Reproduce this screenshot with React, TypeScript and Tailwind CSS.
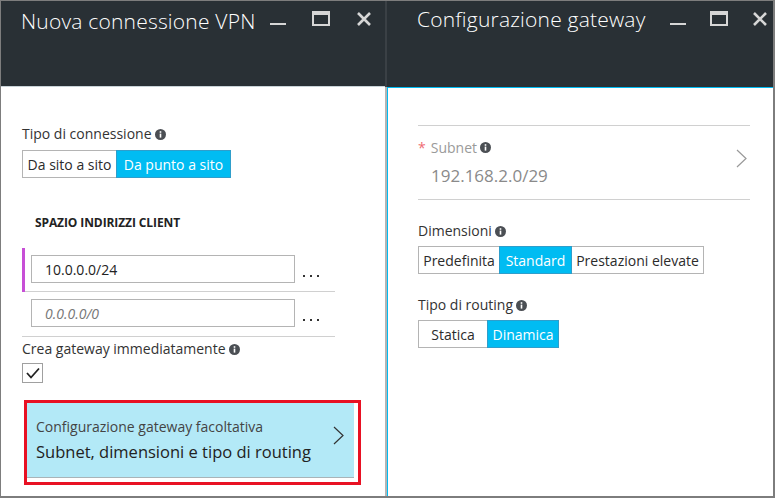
import React from 'react';

const font = { fontFamily: '"Open Sans", "Noto Sans", sans-serif' };

function InfoIcon() {
  return (
    <svg width="11" height="11" viewBox="0 0 11 11" className="ml-[3px] inline-block shrink-0">
      <circle cx="5.5" cy="5.5" r="5.5" fill="#4b4f54" />
      <rect x="4.7" y="4.6" width="1.6" height="4" fill="#fff" />
      <rect x="4.7" y="2.2" width="1.6" height="1.6" fill="#fff" />
    </svg>
  );
}

function WindowControls({ gap }: { gap: string }) {
  return (
    <div className={`flex items-start ${gap}`}>
      <div className="mt-[22px] h-[2px] w-[16px] bg-[#d6d6d6]" />
      <div className="mt-[10px] h-[15px] w-[18px] border-2 border-t-[4px] border-[#d6d6d6]" />
      <svg width="16" height="16" viewBox="0 0 16 16" className="mt-[10px]">
        <path d="M2 2 L14 14 M14 2 L2 14" stroke="#d6d6d6" strokeWidth="2.6" />
      </svg>
    </div>
  );
}

function Toggle({ items, active, widths }: { items: string[]; active: number; widths: string[] }) {
  return (
    <div className="flex h-[28px]">
      {items.map((label, i) => (
        <div
          key={label}
          className={`flex items-center justify-center whitespace-nowrap border text-[14px] ${widths[i]} ${
            i > 0 ? '-ml-px' : ''
          } ${i === active ? 'z-10 border-[#2f9ecb] bg-[#00bcf2] text-white' : 'border-[#b4b4b4] bg-white text-[#2b2b2b]'}`}
        >
          {label}
        </div>
      ))}
    </div>
  );
}

function Dots() {
  return (
    <div className="ml-[8px] mt-[27px] flex gap-[5px]">
      <span className="h-[2px] w-[2px] bg-[#333]" />
      <span className="h-[2px] w-[2px] bg-[#333]" />
      <span className="h-[2px] w-[2px] bg-[#333]" />
    </div>
  );
}

export default function App() {
  return (
    <div className="flex h-[498px] w-[775px] overflow-hidden border-l border-t border-r-2 border-b-2 border-[#7d7d7d] bg-white" style={font}>
      {/* Left blade */}
      <div className="flex w-[384px] flex-col">
        <div className="flex h-[85px] shrink-0 justify-between bg-[#293035] pl-[20px] pr-[13px]">
          <div className="mt-[4px] text-[21px] font-light leading-[32px] tracking-[0.2px] text-white">Nuova connessione VPN</div>
          <WindowControls gap="gap-[26px]" />
        </div>
        <div className="h-px bg-[#c9d3d8]" />
        <div className="flex flex-1 flex-col px-[21px]">
          <div className="mt-[37px] flex items-center text-[14px] leading-[20px] text-[#333]">
            Tipo di connessione
            <InfoIcon />
          </div>
          <div className="mt-[6px]">
            <Toggle items={['Da sito a sito', 'Da punto a sito']} active={1} widths={['w-[95px]', 'w-[115px]']} />
          </div>
          <div className="ml-[13px] mt-[37px] text-[12px] font-bold leading-[16px] tracking-[-0.1px] text-[#222]">
            SPAZIO INDIRIZZI CLIENT
          </div>
          <div className="mt-[17px] w-[313px]">
            <div className="flex h-[44px] border-b border-[#d0d0d0]">
              <div className="h-[44px] w-[3px] bg-[#c74fd6]" />
              <div className="ml-[6px] mt-[7px] flex h-[28px] w-[264px] items-center border border-[#b4b4b4] pl-[13px] text-[14px] text-[#222]">
                10.0.0.0/24
              </div>
              <Dots />
            </div>
            <div className="flex h-[45px] border-b border-[#d0d0d0]">
              <div className="ml-[9px] mt-[7px] flex h-[28px] w-[264px] items-center border border-[#b4b4b4] pl-[13px] text-[14px] italic text-[#777]">
                0.0.0.0/0
              </div>
              <Dots />
            </div>
          </div>
          <div className="mt-[2px] flex items-center text-[14px] leading-[20px] text-[#333]">
            Crea gateway immediatamente
            <InfoIcon />
          </div>
          <div className="mt-[4px] flex h-[20px] w-[21px] items-center justify-center border border-[#a0a0a0]">
            <svg width="14" height="12" viewBox="0 0 14 12">
              <path d="M1 6 L5 10.5 L13 1.5" stroke="#222" strokeWidth="1.8" fill="none" />
            </svg>
          </div>
          <div className="ml-[2px] mt-[17px] h-[85px] w-[337px] border-[3px] border-[#e81123] pb-[4px] pr-[4px]">
            <div className="flex h-full items-center justify-between border-b border-[#a9b4b8] bg-[#b3e9f7] pl-[9px] pr-[10px]">
              <div>
                <div className="text-[14px] leading-[20px] text-[#444]">Configurazione gateway facoltativa</div>
                <div className="mt-[3px] text-[16.5px] leading-[24px] text-[#222]">Subnet, dimensioni e tipo di routing</div>
              </div>
              <svg width="11" height="19" viewBox="0 0 11 19" className="mt-[-10px]">
                <path d="M1 1 L10 9.5 L1 18" stroke="#333" strokeWidth="1.2" fill="none" />
              </svg>
            </div>
          </div>
        </div>
      </div>

      {/* Divider */}
      <div className="flex w-[2px] flex-col">
        <div className="h-[86px] bg-[#3a4045]" />
        <div className="flex-1 bg-[#b4b4b4]" />
      </div>

      {/* Right blade */}
      <div className="flex flex-1 flex-col">
        <div className="flex h-[86px] shrink-0 justify-between bg-[#293035] pl-[30px] pr-[5px]">
          <div className="mt-[2px] text-[21px] font-light leading-[32px] tracking-[0.2px] text-white">Configurazione gateway</div>
          <WindowControls gap="gap-[24px]" />
        </div>
        <div className="flex flex-1 flex-col border-l border-t border-[#00bcf2] pl-[30px] pr-[23px]">
          <div className="mt-[37px] border-t border-[#d0d0d0]" />
          <div className="flex h-[74px] items-center justify-between border-b border-[#d0d0d0]">
            <div>
              <div className="flex items-center text-[14px] leading-[20px]">
                <span className="mr-[5px] text-[#ef6b73]">*</span>
                <span className="text-[#9a9a9a]">Subnet</span>
                <InfoIcon />
              </div>
              <div className="ml-[13px] mt-[6px] text-[17px] leading-[24px] text-[#8a8a8a]">192.168.2.0/29</div>
            </div>
            <svg width="11" height="19" viewBox="0 0 11 19" className="mr-[3px] mt-[-8px]">
              <path d="M1 1 L10 9.5 L1 18" stroke="#999" strokeWidth="1.2" fill="none" />
            </svg>
          </div>
          <div className="mt-[21px] flex items-center text-[14px] leading-[20px] text-[#333]">
            Dimensioni
            <InfoIcon />
          </div>
          <div className="mt-[5px]">
            <Toggle
              items={['Predefinita', 'Standard', 'Prestazioni elevate']}
              active={1}
              widths={['w-[82px]', 'w-[73px]', 'w-[133px]']}
            />
          </div>
          <div className="mt-[21px] flex items-center text-[14px] leading-[20px] text-[#333]">
            Tipo di routing
            <InfoIcon />
          </div>
          <div className="mt-[5px]">
            <Toggle items={['Statica', 'Dinamica']} active={1} widths={['w-[70px]', 'w-[72px]']} />
          </div>
        </div>
      </div>
    </div>
  );
}
